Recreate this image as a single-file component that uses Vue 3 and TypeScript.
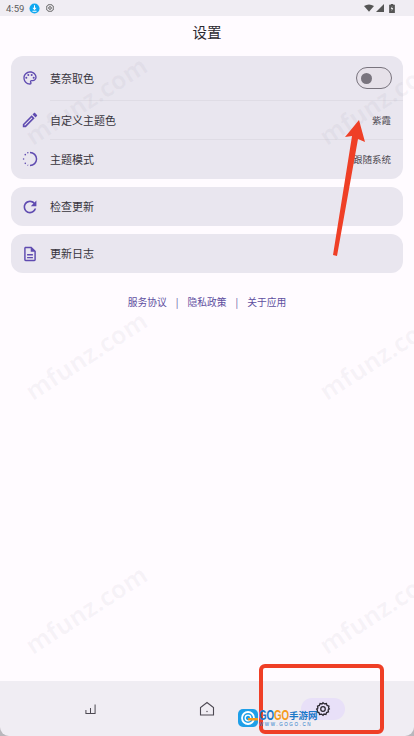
<script setup lang="ts">
// Settings screen with the annotation overlays of the screenshot on top
const marks = [
  { x: 16, y: 83 },
  { x: 310, y: 83 },
  { x: 16, y: 338 },
  { x: 310, y: 338 },
  { x: 16, y: 592 },
  { x: 310, y: 592 },
];
function markStyle(m: { x: number; y: number }) {
  return { left: `${m.x}px`, top: `${m.y}px` };
}
</script>

<template>
  <div class="screen">
    <div class="status">
      <span class="time">4:59</span>
      <svg class="dl" viewBox="0 0 12 12" width="11" height="11">
        <circle cx="6" cy="6" r="5.5" fill="#10a8f0" />
        <path d="M6 2.5v4M4.3 5.2 6 7l1.700-1.800M3.800 9h4.400" stroke="#fff" stroke-width="1.100" fill="none" />
      </svg>
      <svg class="cog-small" viewBox="0 0 24 24" width="10" height="10">
        <path d="M12 3l2 1.600 2.600-.4 1 2.400 2.400 1-.4 2.600L21 12l-1.400 1.800.4 2.600-2.400 1-1 2.400-2.600-.4L12 21l-2-1.600-2.600.4-1-2.400-2.400-1 .4-2.600L3 12l1.400-1.800L4 7.600l2.400-1 1-2.400 2.600.4z" fill="none" stroke="#666" stroke-width="2.400" />
        <circle cx="12" cy="12" r="3.200" fill="none" stroke="#666" stroke-width="2.400" />
      </svg>
      <span class="grow"></span>
      <svg viewBox="0 0 13 10" width="10" height="8"><path d="M0 2.500Q6.500-1.500 13 2.500L6.500 10z" fill="#555" /></svg>
      <svg class="signal" viewBox="0 0 10 10" width="8" height="8"><path d="M10 0v10H0z" fill="#555" /></svg>
      <svg class="batt" viewBox="0 0 7 11" width="6" height="9">
        <path d="M2 0h3v1h2v10H0V1h2z" fill="#555" />
        <path d="M3.800 2.500 2 6h1.300L3 8.800 5 5H3.600z" fill="#eee" />
      </svg>
    </div>

    <h1 class="title">设置</h1>

    <div class="card">
      <div class="row first">
        <svg class="ic" viewBox="0 0 24 24" width="16" height="16">
          <path d="M12 22C6.490 22 2 17.510 2 12S6.490 2 12 2s10 4.040 10 9c0 3.310-2.690 6-6 6h-1.770c-.28 0-.5.220-.5.500 0 .120.050.230.130.330.410.470.640 1.060.640 1.670A2.500 2.500 0 0 1 12 22zm0-18c-4.410 0-8 3.590-8 8s3.590 8 8 8c.280 0 .5-.220.5-.5a.540.540 0 0 0-.140-.350c-.410-.460-.630-1.050-.630-1.650a2.500 2.500 0 0 1 2.500-2.500H16c2.210 0 4-1.790 4-4 0-3.860-3.590-7-8-7z" fill="#5f4bb0" />
          <circle cx="6.500" cy="11.500" r="1.500" fill="#5f4bb0" /><circle cx="9.500" cy="7.500" r="1.500" fill="#5f4bb0" />
          <circle cx="14.500" cy="7.500" r="1.500" fill="#5f4bb0" /><circle cx="17.500" cy="11.500" r="1.500" fill="#5f4bb0" />
        </svg>
        <span class="label">莫奈取色</span>
        <span class="switch"><span class="knob"></span></span>
      </div>
      <div class="row line">
        <svg class="ic" viewBox="2 2 20 20" width="16" height="16">
          <path d="M14.060 9.020l.920.920L5.920 19H5v-.920l9.060-9.060M17.660 3c-.250 0-.510.100-.700.290l-1.830 1.830 3.750 3.750 1.830-1.830c.390-.390.390-1.020 0-1.410l-2.340-2.340c-.200-.200-.450-.290-.710-.290zm-3.600 3.190L3 17.250V21h3.750L17.810 9.940l-3.750-3.750z" fill="#5f4bb0" />
        </svg>
        <span class="label">自定义主题色</span>
        <span class="value">紫霞</span>
      </div>
      <div class="row line last">
        <svg class="ic" viewBox="1 1 22 22" width="16" height="16">
          <path d="M12 3a9 9 0 0 1 0 18" fill="none" stroke="#5f4bb0" stroke-width="2" />
          <path d="M9.500 20.700l-.8-.3" fill="none" stroke="#5f4bb0" stroke-width="2" />
          <circle cx="5.500" cy="18" r="1.100" fill="#5f4bb0" /><circle cx="3.200" cy="12" r="1.100" fill="#5f4bb0" />
          <circle cx="5.500" cy="6" r="1.100" fill="#5f4bb0" /><circle cx="9" cy="3.500" r="1" fill="#5f4bb0" />
        </svg>
        <span class="label">主题模式</span>
        <span class="value">跟随系统</span>
      </div>
    </div>

    <div class="card">
      <div class="row solo">
        <svg class="ic" viewBox="2 2 20 20" width="16" height="16">
          <path d="M17.650 6.350C16.200 4.900 14.210 4 12 4c-4.420 0-7.990 3.580-7.990 8s3.570 8 7.990 8c3.730 0 6.840-2.550 7.730-6h-2.080c-.820 2.330-3.040 4-5.650 4-3.310 0-6-2.690-6-6s2.690-6 6-6c1.660 0 3.140.690 4.220 1.780L13 11h7V4l-2.350 2.350z" fill="#5f4bb0" />
        </svg>
        <span class="label">检查更新</span>
      </div>
    </div>

    <div class="card">
      <div class="row solo">
        <svg class="ic" viewBox="1 1 22 22" width="16" height="16">
          <path d="M8 16h8v2H8zm0-4h8v2H8zm6-10H6c-1.100 0-2 .900-2 2v16c0 1.100.890 2 1.990 2H18c1.100 0 2-.900 2-2V8l-6-6zm4 18H6V4h7v5h5v11z" fill="#5f4bb0" />
        </svg>
        <span class="label">更新日志</span>
      </div>
    </div>

    <div class="links">
      <span>服务协议</span><i>|</i><span>隐私政策</span><i>|</i><span>关于应用</span>
    </div>

    <div class="grow"></div>

    <div class="nav-wrap">
      <nav class="nav">
        <div class="tab bars">
          <svg viewBox="0 0 12 12" width="11" height="12">
            <path d="M1 7v4h10V1M6 5v6" fill="none" stroke="#4d4952" stroke-width="1.100" />
          </svg>
        </div>
        <div class="tab">
          <svg viewBox="0 0 16 16" width="16" height="16">
            <path d="M1.500 14V6.500L8 1.500l6.500 5V14z" fill="none" stroke="#4d4952" stroke-width="1.100" />
            <circle cx="8" cy="10.500" r=".7" fill="#4d4952" />
          </svg>
        </div>
        <div class="tab settings">
          <span class="pill">
            <svg viewBox="0 0 24 24" width="16" height="16">
              <path d="M12 2.500l2.200 1.900 2.900-.6 1 2.800 2.800 1-.6 2.900L21.500 12l-1.900 1.500.6 2.900-2.800 1-1 2.800-2.900-.6L12 21.500l-2.200-1.900-2.900.6-1-2.800-2.800-1 .6-2.900L2.500 12l1.900-1.500-.6-2.900 2.800-1 1-2.800 2.900.6z" fill="none" stroke="#2a2730" stroke-width="1.900" />
              <circle cx="12" cy="12" r="3.400" fill="none" stroke="#2a2730" stroke-width="1.900" />
            </svg>
          </span>
        </div>
      </nav>
    </div>

    <!-- annotations laid over the app by whoever took the screenshot -->
    <span v-for="(m, i) in marks" :key="i" class="mark" :style="markStyle(m)">mfunz.com</span>
    <svg class="arrow" viewBox="0 0 60 150" width="60" height="150">
      <path d="M39 10 25 27 32 26 13 145 17 146 38 29 45 32z" fill="#ef3f26" />
    </svg>
    <div class="redbox"></div>
    <div class="logo">
      <svg viewBox="0 0 20 18" width="20" height="18">
        <rect width="20" height="18" rx="5" fill="#1e9fe8" />
        <circle cx="10" cy="9" r="6" fill="none" stroke="#fff" stroke-width="1.800" />
        <circle cx="10" cy="9" r="2.800" fill="none" stroke="#fff" stroke-width="1.300" />
        <path d="M10 9h10v2.500H10z" fill="#f59a1c" />
      </svg>
      <div class="logo-text">
        <div class="logo-main"><b class="go blue">GO</b><b class="go orange">GO</b><b class="blue cn">手游网</b></div>
        <div class="logo-url">WWW.GOGO.CN</div>
      </div>
    </div>
  </div>
</template>

<style>
html, body { margin: 0; background: #fffbff; }
</style>

<style scoped>
.screen {
  position: relative;
  width: 414px;
  height: 736px;
  overflow: hidden;
  display: flex;
  flex-direction: column;
  background: #fffbff;
  font-family: "Noto Sans CJK SC", "Noto Sans", sans-serif;
  color: #2b2930;
}
.grow { flex: 1; }
.status {
  height: 16px;
  flex: none;
  display: flex;
  align-items: center;
  padding: 0 19px 0 6px;
  background: #f0edf3;
}
.time { font: 9.500px Roboto, sans-serif; color: #5c5c5c; width: 23px; }
.cog-small { margin-left: 5px; }
.signal { margin: 0 5px 0 2px; }
.title {
  height: 40px;
  margin: 0;
  flex: none;
  font-size: 14.500px;
  font-weight: 400;
  line-height: 32px;
  text-align: center;
}
.card {
  margin: 0 11px 8px;
  background: #e9e6ef;
  border-radius: 12px;
  flex: none;
}
.row {
  position: relative;
  height: 39px;
  display: flex;
  align-items: center;
  padding: 0 12px 0 11px;
}
.row.first { height: 44px; }
.row.last { height: 40px; }
.row.solo .label { padding-bottom: 2px; }
.line::before {
  content: "";
  position: absolute;
  left: 39px;
  right: 0;
  top: 0;
  height: 1px;
  background: #dfdce5;
}
.ic { flex: none; }
.label { font-size: 11px; margin-left: 12px; flex: 1; color: #37343c; }
.value { font-size: 9.500px; color: #4d4a52; }
.switch {
  width: 36px;
  height: 22px;
  box-sizing: border-box;
  border: 1.500px solid #79747e;
  border-radius: 11px;
  background: #e6e1e9;
  display: flex;
  align-items: center;
  padding-left: 4px;
  margin-right: -1px;
}
.knob { width: 11px; height: 11px; border-radius: 50%; background: #79747e; }
.links {
  margin-top: 6px;
  height: 30px;
  display: flex;
  justify-content: center;
  align-items: center;
  gap: 9px;
  font-size: 9.750px;
  color: #5e4fa0;
  flex: none;
}
.links i { font-style: normal; }
.nav-wrap { flex: none; background: #b9b7bc; }
.nav {
  height: 55px;
  display: grid;
  grid-template-columns: repeat(3, 1fr);
  background: #f0edf3;
  border-radius: 0 0 9px 9px;
}
.tab { display: flex; align-items: center; justify-content: center; }
.bars { justify-content: flex-start; padding-left: 85px; }
.settings { justify-content: flex-start; padding-left: 25px; }
.pill {
  width: 44px;
  height: 22px;
  border-radius: 11px;
  background: #e8e0f8;
  display: flex;
  align-items: center;
  justify-content: center;
}
.mark {
  position: absolute;
  font: 700 25px "Open Sans", sans-serif;
  color: rgba(120, 110, 140, 0.06);
  transform: rotate(-33deg);
  white-space: nowrap;
  pointer-events: none;
}
.arrow { position: absolute; left: 320px; top: 110px; }
.redbox {
  position: absolute;
  left: 259px;
  top: 664px;
  width: 117px;
  height: 62px;
  border: 4px solid #ef3f26;
  border-radius: 6px;
}
.logo { position: absolute; left: 238px; top: 708px; display: flex; align-items: center; gap: 1px; white-space: nowrap; }
.logo-main { display: flex; font: 700 15px/14px "Liberation Sans", sans-serif; }
.go { display: block; width: 15px; transform: scaleX(0.65); transform-origin: left; }
.logo-main .cn { font: 700 9.500px/14px "Noto Sans CJK SC", sans-serif; }
.blue { color: #1b78c8; }
.orange { color: #f59a1c; }
.logo-url { font: 4.500px/5px "Liberation Sans", sans-serif; color: #1b78c8; letter-spacing: 1.600px; }
</style>
